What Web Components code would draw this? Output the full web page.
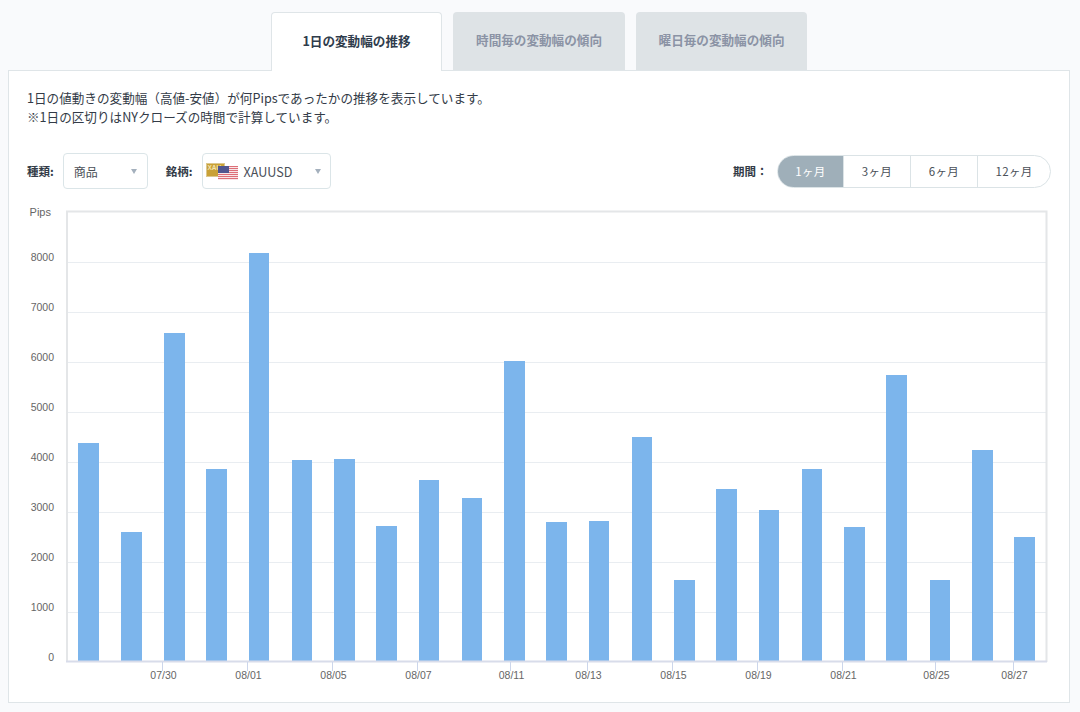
<!DOCTYPE html>
<html lang="ja"><head><meta charset="utf-8">
<style>
html,body{margin:0;padding:0;background:#f9fafc;}
body{width:1080px;height:712px;overflow:hidden;font-family:"Noto Sans CJK JP","Noto Sans",sans-serif;color:#333;}
</style></head><body>
<fx-page>
  <fx-tabs slot="tabs">
    <fx-tab active w="171">1日の変動幅の推移</fx-tab>
    <fx-tab w="172">時間毎の変動幅の傾向</fx-tab>
    <fx-tab w="171">曜日毎の変動幅の傾向</fx-tab>
  </fx-tabs>
  <fx-panel slot="panel">
    <fx-note>1日の値動きの変動幅（高値-安値）が何Pipsであったかの推移を表示しています。<br>※1日の区切りはNYクローズの時間で計算しています。</fx-note>
    <fx-controls>
      <fx-label>種類:</fx-label>
      <fx-select w="85">商品</fx-select>
      <fx-label style="margin-left:18px">銘柄:</fx-label>
      <fx-select w="129" flag>XAUUSD</fx-select>
      <fx-period></fx-period>
    </fx-controls>
    <fx-chart></fx-chart>
  </fx-panel>
</fx-page>
<script>
function def(name, css, html, init){
  customElements.define(name, class extends HTMLElement{
    constructor(){super();const r=this.attachShadow({mode:'open'});r.innerHTML='<style>'+css+'</style>'+html;}
    connectedCallback(){init&&init.call(this,this.shadowRoot);}
  });
}
def('fx-page',':host{display:block;padding-top:12px}',
 '<slot name="tabs"></slot><slot name="panel"></slot>');
def('fx-tabs',':host{display:flex;justify-content:flex-start;gap:11px;padding-left:271px;height:59px;position:relative;z-index:1;margin-bottom:-1px}','<slot></slot>');
def('fx-tab',`:host{display:flex;align-items:center;justify-content:center;box-sizing:border-box;height:58px;padding-bottom:3px;border-radius:4px 4px 0 0;background:#dee3e6;color:#8b93a5;font-size:12.6px;font-weight:700;}
:host([active]){background:#fff;color:#2f3c4c;border:1px solid #dfe5e8;border-bottom:none;height:59px}`,'<slot></slot>',
 function(){this.style.width=this.getAttribute('w')+'px'});
def('fx-panel',':host{display:block;box-sizing:border-box;margin:0 10px 0 8px;width:1062px;height:633px;background:#fff;border:1px solid #dfe5e8;padding:17px 18px 0 18px}','<slot></slot>');
def('fx-note',':host{display:block;font-size:12.6px;line-height:19px;color:#333b47;height:65px}','<slot></slot>');
def('fx-controls',':host{display:flex;align-items:center;height:36px;margin-bottom:15px}','<slot></slot>');
def('fx-label',':host{display:block;font-size:11.5px;font-weight:700;color:#333b47;margin-right:9px}','<slot></slot>');
def('fx-select',`:host{display:flex;align-items:center;box-sizing:border-box;height:36px;border:1px solid #dbe5e8;border-radius:4px;background:#fff;font-size:12px;color:#4a5058;padding-left:10px;position:relative}
:host([flag]){font-size:12.6px}
:host([flag]) .a{right:9px}
svg{display:block;flex:none;margin:0 5px 0 -7px}
svg text{font-family:"Liberation Sans",Arial,sans-serif;font-size:6.500px;font-weight:700;fill:#f3e4b4}
.a{position:absolute;right:10px;top:15px;width:0;height:0;border:3.500px solid transparent;border-top:5px solid #a4b0bd;border-bottom:0}`,
 '<span id="f"></span><slot></slot><i class="a"></i>',
 function(r){this.style.width=this.getAttribute('w')+'px';
  if(this.hasAttribute('flag')){
   let s='';for(let i=0;i<14;i++){s+=`<rect x="12" y="${3+i}" width="20" height="1" fill="${i%2?'#f8e6e8':'#dd6f78'}"/>`;}
   r.getElementById('f').innerHTML=`<svg width="33" height="17" viewBox="0 0 33 17"><rect x="0" y="0" width="19" height="14" fill="#c9a136"/><rect x=".5" y=".5" width="18" height="13" fill="none" stroke="#dcc88e"/><text x="1.500" y="6.500">XAU</text>${s}<rect x="12" y="3" width="11" height="7" fill="#50568f"/></svg>`;
  }
 });
def('fx-period',`:host{margin-left:auto;display:flex;align-items:center}
.l{font-size:11.5px;font-weight:700;color:#333b47;margin-right:9px;letter-spacing:.2px}
.g{display:flex;height:33px;box-sizing:border-box;border:1px solid #dbe3e6;border-radius:17px;overflow:hidden;background:#fff}
.g span{display:flex;align-items:center;justify-content:center;font-size:11.500px;color:#4a5058;border-left:1px solid #dbe3e6;letter-spacing:.3px}
.g span:first-child{border-left:0;background:#9fafb9;color:#fff}`,
 `<span class="l">期間：</span><div class="g"><span style="width:65px">1ヶ月</span><span style="width:66px">3ヶ月</span><span style="width:66px">6ヶ月</span><span style="width:72px">12ヶ月</span></div>`);
def('fx-chart',`:host{display:block;margin:0 -18px;height:499px}
svg{display:block}text{font-family:"Liberation Sans",Arial,sans-serif;font-size:10.500px;fill:#666}`,
 '<svg id="s" width="1060" height="499" viewBox="9 204 1060 499"></svg>',
 function(r){
  const tops=[443,532,333,469,253,460,459,526,480,498,361,522,521,437,580,489,510,469,527,375,580,450,537];
  const L=[78,121,164,206,249,292,334,376,419,462,504,546,589,632,674,716,759,802,844,886,930,972,1014];
  const R=[99,142,185,227,269,312,355,397,439,482,525,567,609,652,695,737,779,822,865,907,950,993,1035];
  let h='';
  for(let v=1;v<=8;v++){const y=662-v*50+0.5;h+=`<line x1="67" x2="1046" y1="${y}" y2="${y}" stroke="#e9edf1"/>`;
    h+=`<text x="54" y="${y-2}" text-anchor="end">${v*1000}</text>`;}
  h+=`<text x="54" y="660.500" text-anchor="end">0</text><text x="51" y="216" text-anchor="end" style="font-size:11px">Pips</text>`;
  h+=`<path d="M67 662V211.500H1046.500V662" fill="none" stroke="#e4e6e8" stroke-width="2"/>`;
  tops.forEach((t,i)=>{h+=`<rect x="${L[i]}" y="${t}" width="${R[i]-L[i]}" height="${661-t}" fill="#7cb5ec"/>`;});
  h+=`<line x1="66" x2="1047" y1="661.500" y2="661.500" stroke="#d8dcea" stroke-width="2"/>`;
  [['07/30',163],['08/01',248],['08/05',333],['08/07',418],['08/11',511],['08/13',588],['08/15',673],['08/19',758],['08/21',843],['08/25',936],['08/27',1014]].forEach(([t,x])=>{
    h+=`<line x1="${x-.5}" x2="${x-.5}" y1="662" y2="671" stroke="#ccd6eb"/><text x="${x+.5}" y="679" text-anchor="middle">${t}</text>`;});
  r.getElementById('s').innerHTML=h;
 });
</script>
</body></html>
